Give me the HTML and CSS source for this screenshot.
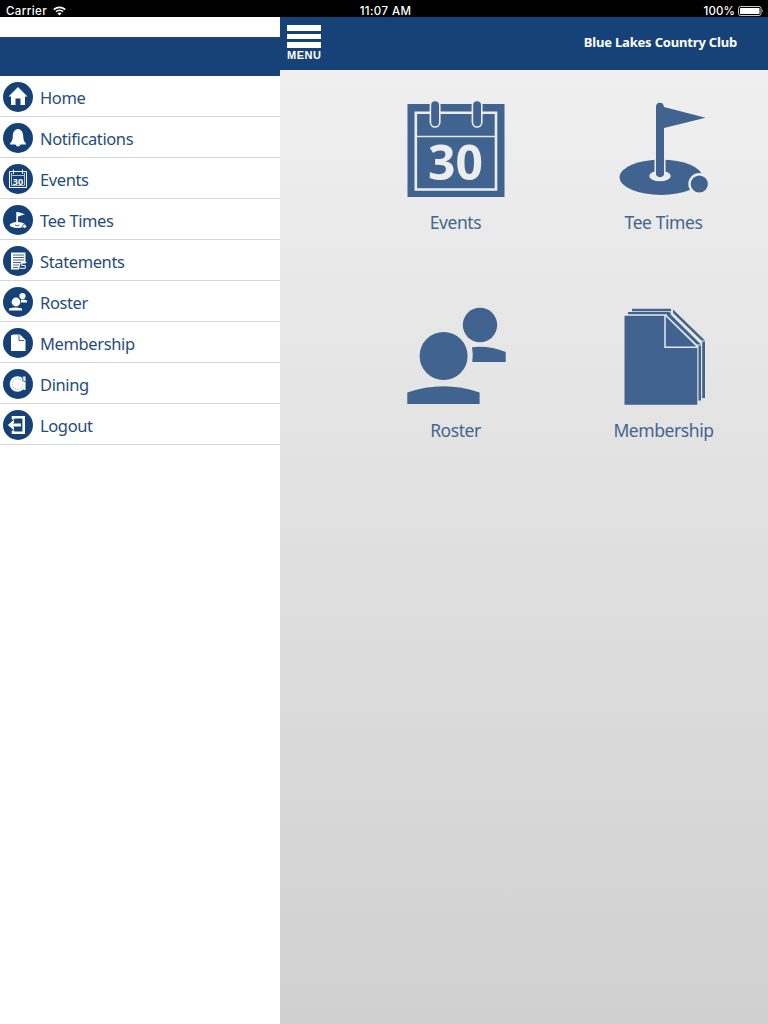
FILE: index.html
```html
<!DOCTYPE html>
<html lang="en">
<head>
<meta charset="utf-8">
<title>Blue Lakes Country Club</title>
<link rel="stylesheet" href="styles.css">
</head>
<body>
<div class="status">
  <div class="status-left"><span>Carrier</span>
    <svg class="wifi" width="13" height="10" viewBox="0 0 13 10" fill="none" stroke="#fff" stroke-width="1.6"><path d="M.8 3.5Q6.500-.8 12.200 3.500M2.900 5.700Q6.500 2.900 10.100 5.700"/><path d="M4.300 7.300Q6.500 5.500 8.700 7.300L6.500 9.600Z" fill="#fff" stroke="none"/></svg>
  </div>
  <div class="status-time">11:07 AM</div>
  <div class="status-right"><span>100%</span>
    <svg width="26" height="10" viewBox="0 0 26 10"><rect x=".5" y=".5" width="22.500" height="9" rx="2" fill="none" stroke="#ccc"/><rect x="2" y="2" width="19.500" height="6" rx=".6" fill="#fff"/><path d="M24 3q1.500 2 0 4z" fill="#ccc"/></svg>
  </div>
</div>
<div class="app">
  <nav class="sidebar">
    <div class="sidebar-head"></div>
    <ul class="menu">
      <li><svg class="mi" viewBox="0 0 30 30"><circle cx="15" cy="15" r="15"/><path class="w" d="M15 5L24.500 14.500H22V23H17.500V16.500H12.500V23H8V14.500H5.500Z"/></svg><span>Home</span></li>
      <li><svg class="mi" viewBox="0 0 30 30"><circle cx="15" cy="15" r="15"/><path class="w" d="M15 6C18.500 6.500 20 9 20.200 13C20.400 17 21 18.500 23 20.500V21.500H7V20.500C9 18.500 9.600 17 9.800 13C10 9 11.500 6.500 15 6ZM12 21H18Q15 26 12 21Z"/></svg><span>Notifications</span></li>
      <li><svg class="mi" viewBox="0 0 30 30"><circle cx="15" cy="15" r="15"/><path class="l" d="M6.500 7.500H23.500V23.500H6.500Z"/><path class="l faint" d="M8.500 11.500H21.500M8.500 21.500H21.500M8.500 9V21.500M21.500 9V21.500"/><path class="l" d="M10.500 5.500V10M19.500 5.500V10"/><text x="15" y="20.500" class="tiny">30</text></svg><span>Events</span></li>
      <li><svg class="mi" viewBox="0 0 30 30"><circle cx="15" cy="15" r="15"/><path class="w" d="M13.300 7H15L22 9.300L15 11.500V19.500H13.300Z"/><ellipse class="w" cx="14.500" cy="20" rx="7.800" ry="3"/><path class="l d" d="M12 20Q14.200 21.800 16.500 20"/><circle class="w" cx="21.500" cy="21.300" r="2" stroke="#154177" stroke-width=".7"/></svg><span>Tee Times</span></li>
      <li><svg class="mi" viewBox="0 0 30 30"><circle cx="15" cy="15" r="15"/><path class="w" d="M8 6.500H22.500V23.500H8Z"/><path class="l d" d="M10 9H21M10 11.500H21M10 14H21M10 16.500H18M10 19H16M10 21.500H15"/><path d="M17.500 17.500H24V24H16Z"/><path class="l" d="M23.500 16.500H18.800V19.500H22.300V22.300H17"/></svg><span>Statements</span></li>
      <li><svg class="mi" viewBox="0 0 30 30"><circle cx="15" cy="15" r="15"/><circle class="w" cx="13" cy="15" r="4.400"/><path class="w" d="M6 23.500V21.500Q12.500 19.500 19 21.500V23.500ZM18 12.700Q21 12.200 24 13.500V15.500H18Z"/><circle class="w" cx="19.500" cy="9" r="3.100"/></svg><span>Roster</span></li>
      <li><svg class="mi" viewBox="0 0 30 30"><circle cx="15" cy="15" r="15"/><path class="w" d="M8 7.500L10 6.500H17L22.500 12V23H8Z"/><path class="l d" d="M16 7V12.500H21"/></svg><span>Membership</span></li>
      <li><svg class="mi" viewBox="0 0 30 30"><circle cx="15" cy="15" r="15"/><circle class="w" cx="14.500" cy="15" r="7.800"/><circle cx="14.500" cy="15" r="5.400" fill="none" stroke="#154177" stroke-width=".5" stroke-dasharray="1 1.500"/><path class="w" d="M19.500 7.500H22.500V21H20.500V14Z"/><path class="l d" d="M19.800 7.500V11.500L22.500 13"/></svg><span>Dining</span></li>
      <li><svg class="mi" viewBox="0 0 30 30"><circle cx="15" cy="15" r="15"/><path d="M10 9.500V7.300H20.700V22.700H10V20.500" fill="none" stroke="#fff" stroke-width="2.600"/><path d="M18 15H8" fill="none" stroke="#fff" stroke-width="3"/><path class="w" d="M4.800 15L11 9.800V12.500L9 15L11 17.500V20.200Z"/></svg><span>Logout</span></li>
    </ul>
  </nav>
  <main class="main">
    <header class="bar">
      <div class="menu-btn"><i></i><i></i><i></i><span>MENU</span></div>
      <h1>Blue Lakes Country Club</h1>
    </header>
    <div class="tiles">
      <div class="tile">
        <svg viewBox="395 95 120 110"><path d="M407.500 104H504.500V197H407.500Z"/><path d="M415.800 112.700H496V189.500H415.800Z" fill="none" stroke="#ecedef" stroke-width="2.600"/><path d="M417 136.500H496" stroke="#e4e8ee" stroke-width="1.500"/><g stroke="#ecedef" stroke-width="1.600"><rect x="430.400" y="100.500" width="9.400" height="26.500" rx="4.700"/><rect x="472.400" y="100.500" width="9.400" height="26.500" rx="4.700"/></g><text x="455.500" y="180.200" class="thirty" textLength="55" lengthAdjust="spacingAndGlyphs">30</text></svg>
        <span>Events</span>
      </div>
      <div class="tile">
        <svg viewBox="603 95 120 110"><ellipse cx="661" cy="177.300" rx="41.500" ry="17.600"/><ellipse cx="660" cy="176" rx="10.800" ry="5.300" fill="#ececec"/><path d="M655.200 160V176H664.800V158" fill="#ececec" stroke="#ececec" stroke-width="1.500"/><path d="M656 107Q656 102.700 660 102.700Q663.500 102.700 664 107L705.500 117.700L664 128V175Q660 179.500 656 175Z"/><circle cx="699.300" cy="184" r="9.800" stroke="#ececec" stroke-width="2.400"/></svg>
        <span>Tee Times</span>
      </div>
      <div class="tile">
        <svg viewBox="395 303 120 110"><circle cx="443.600" cy="356" r="24"/><circle cx="480" cy="325" r="17.200"/><path d="M407.300 404V392.500Q443.500 380 479.600 392.500V404ZM472 347.200Q490 345.500 505.700 352V362H472.300Q473.500 354 472 347.200Z"/></svg>
        <span>Roster</span>
      </div>
      <div class="tile">
        <svg viewBox="603 303 120 110"><path d="M624.500 315.700H665L697.300 347.500V404.700H624.500Z"/><path d="M628 312H669.500L671.500 314.200H628ZM632 308.800H671V311.200H632ZM673 309.500L705 340.500H701.500L673 313ZM669 313L701 344.500H697L666.500 315ZM698.500 345.500H701V400.500H698.500ZM702.200 341.500H705V398H702.200Z"/><path d="M665 315V347.300H697.500" fill="none" stroke="#e8e9eb" stroke-width="1.500"/></svg>
        <span>Membership</span>
      </div>
    </div>
  </main>
</div>
</body>
</html>
```

FILE: styles.css
```css
* { box-sizing: border-box; }
body { margin: 0; width: 768px; height: 1024px; overflow: hidden; display: flex; flex-direction: column; background: #fff; font-family: "Noto Sans", "Open Sans", sans-serif; }
.status { height: 17px; background: #000; color: #fff; display: grid; grid-template-columns: 1fr auto 1fr; align-items: center; padding: 4px 4px 0 6px; font: 500 11.5px/14px Inter, Roboto, sans-serif; letter-spacing: .4px; }
.status-left, .status-right { display: flex; align-items: center; }
.status-left { gap: 6px; }
.status-right { justify-content: flex-end; gap: 3px; letter-spacing: .1px; }
.status-time { padding-left: 1px; }
.app { flex: 1; display: flex; }
.sidebar { width: 280px; padding-top: 20px; background: #fff; }
.sidebar-head { height: 39px; background: #174277; border-top: 1px solid #294769; }
.menu { list-style: none; margin: 0; padding: 0; }
.menu li { height: 41px; display: flex; align-items: center; gap: 7px; padding: 2px 0 0 3px; border-bottom: 1px solid #d5d6da; font-size: 16.5px; line-height: 22px; letter-spacing: -.38px; color: #264c7e; }
.menu li span { padding-top: 2px; }
.mi { width: 30px; height: 30px; fill: #154177; }
.w { fill: #fff; }
.l { fill: none; stroke: #fff; stroke-width: 1; }
.faint { stroke: #b4c3d6; }
.d { fill: none; stroke: #154177; stroke-width: .8; }
.tiny { font-size: 9px; font-weight: 700; letter-spacing: 0; fill: #fff; text-anchor: middle; }
.main { flex: 1; background: linear-gradient(#f1f1f1, #d0d0d0); }
.bar { height: 53px; background: #174277; color: #fff; display: flex; justify-content: space-between; align-items: flex-start; padding: 8px 31px 0 7px; }
.bar h1 { margin: 9px 0 0; font-size: 13px; line-height: 16px; font-weight: 700; letter-spacing: -.18px; }
.menu-btn { width: 34px; display: flex; flex-direction: column; gap: 3px; }
.menu-btn i { height: 5.500px; background: #fff; }
.menu-btn span { margin-top: -1px; font: 700 11px/10px "Liberation Sans", Arial, sans-serif; letter-spacing: .5px; }
.tiles { display: grid; grid-template-columns: 208px 208px; grid-auto-rows: 208px; padding-left: 71px; }
.tile { display: flex; flex-direction: column; align-items: center; padding-top: 25px; font-size: 17.5px; letter-spacing: -.42px; line-height: 24px; color: #446492; }
.tile svg { width: 120px; height: 110px; fill: #40638f; }
.tile span { margin-top: 5px; padding-left: 1px; }
.tile .thirty { font-size: 48px; letter-spacing: 0; font-weight: 700; fill: #ecedef; text-anchor: middle; }
```
